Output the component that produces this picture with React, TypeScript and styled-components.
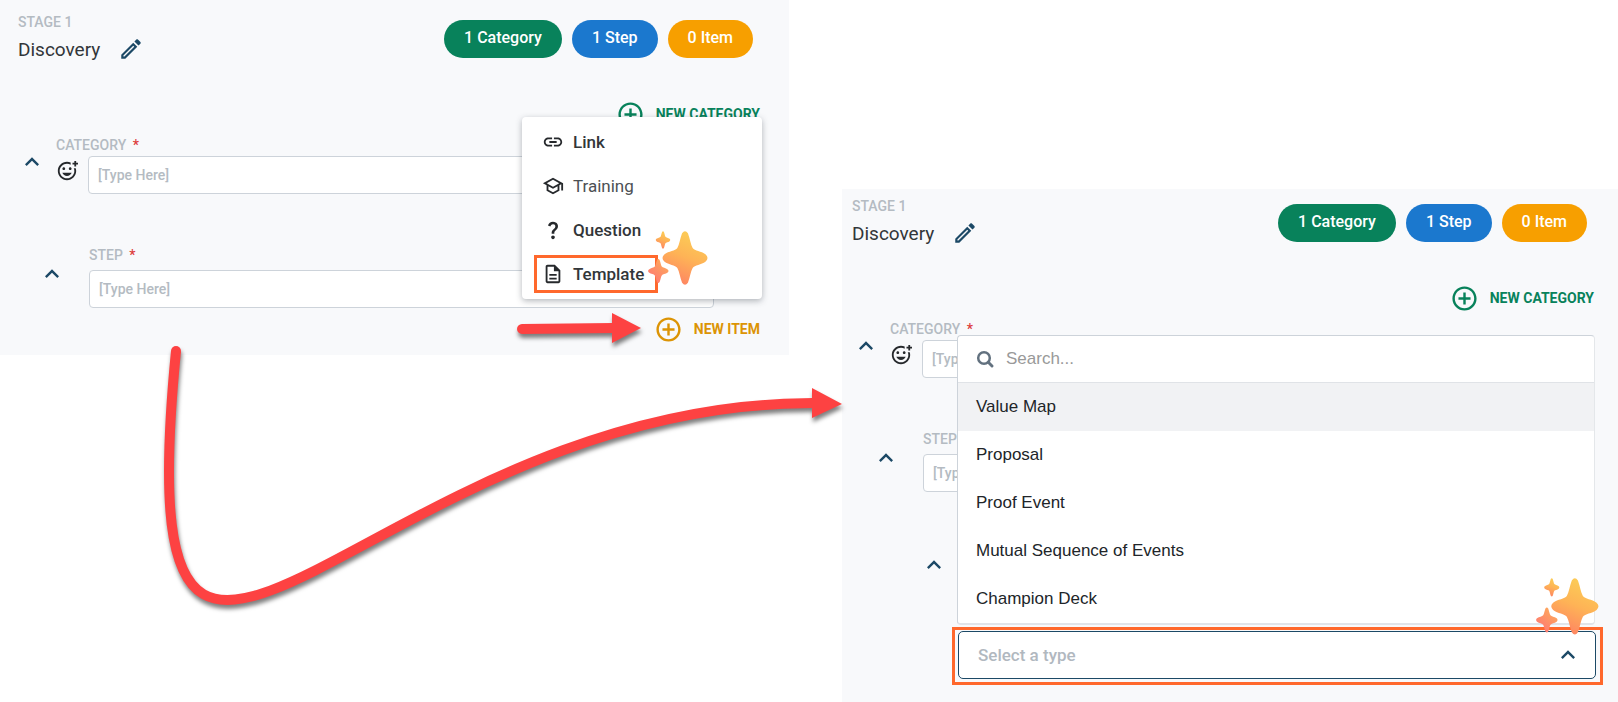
import React from "react";
import styled, { createGlobalStyle } from "styled-components";
import {
  MdAddCircleOutline,
  MdKeyboardArrowUp,
  MdLink,
  MdOutlineAddReaction,
  MdOutlineDescription,
  MdOutlineSchool,
  MdQuestionMark,
} from "react-icons/md";

const colors = {
  panel: "#f8f9fb",
  muted: "#b4bbc2",
  ink: "#323639",
  navy: "#1c4966",
  green: "#08825b",
  blue: "#1b78ce",
  amber: "#f79f00",
  amberText: "#dc9405",
  line: "#cdd3da",
  highlight: "#ff682c",
  arrow: "#fd4242",
};

const GlobalStyle = createGlobalStyle`
  * { box-sizing: border-box; }
  body { margin: 0; background: #fff; font-family: Roboto, "Liberation Sans", sans-serif; color: ${colors.ink}; }
  button, input, select { font-family: inherit; margin: 0; }
  svg { display: block; flex: none; }
`;

const Page = styled.main`
  position: relative;
  display: grid;
  grid-template-columns: 789fr 776fr;
  column-gap: 53px;
  align-items: start;
`;

const Panel = styled.section<{ $second?: boolean }>`
  background: ${colors.panel};
  margin-top: ${(p) => (p.$second ? 189 : 0)}px;
  padding: ${(p) => (p.$second ? "8px 24px 17px 10px" : "13px 29px 11px 18px")};
`;

const Header = styled.header`
  display: flex;
  justify-content: space-between;
  align-items: flex-start;
`;

const StageLabel = styled.div`
  font-size: 14px;
  line-height: 18px;
  font-weight: 500;
  color: ${colors.muted};
`;

const TitleRow = styled.div`
  display: flex;
  align-items: flex-start;
  gap: 18px;
  margin-top: 5px;
`;

const Title = styled.h2`
  margin: 0;
  font-size: 19px;
  line-height: 28px;
  font-weight: 400;
`;

const IconButton = styled.button`
  display: flex;
  padding: 0;
  border: 0;
  background: none;
  color: ${colors.navy};
`;

const Pills = styled.div`
  display: flex;
  gap: 10px;
  padding: 7px 7px 0 0;
`;

const Pill = styled.span<{ $color: string }>`
  padding: 0 20px 2px;
  border-radius: 19px;
  background: ${(p) => p.$color};
  color: #fff;
  font-size: 16px;
  line-height: 36px;
  font-weight: 500;
`;

const ActionRow = styled.div<{ $gap: number }>`
  position: relative;
  display: flex;
  justify-content: flex-end;
  align-items: center;
  gap: 13px;
  margin-top: ${(p) => p.$gap}px;
`;

const ActionButton = styled.button<{ $color: string }>`
  display: flex;
  align-items: center;
  gap: 11px;
  padding: 0;
  border: 0;
  background: none;
  color: ${(p) => p.$color};
  font-size: 14px;
  line-height: 29px;
  font-weight: 700;
`;

const Block = styled.div<{ $indent: number; $gap: number; $top: number }>`
  display: flex;
  align-items: flex-start;
  gap: ${(p) => p.$gap}px;
  margin-top: ${(p) => p.$top}px;
  padding-left: ${(p) => p.$indent}px;
`;

const Toggle = styled(IconButton)<{ $drop: number }>`
  margin-top: ${(p) => p.$drop}px;
`;

const Body = styled.div<{ $gap: number }>`
  flex: 1;
  min-width: 0;
  display: flex;
  flex-direction: column;
  gap: ${(p) => p.$gap}px;
  padding-right: 46px;
`;

const Label = styled.label`
  font-size: 14px;
  line-height: 18px;
  font-weight: 500;
  color: ${colors.muted};

  span { color: #dd3c3c; margin-left: 3px; }
`;

const InputRow = styled.div`
  display: flex;
  align-items: flex-start;
  gap: 10px;
`;

const Emoji = styled(IconButton)`
  margin-top: 4px;
  color: #26292c;
`;

const TextInput = styled.input`
  flex: 1;
  min-width: 0;
  width: 100%;
  height: 38px;
  padding: 0 9px;
  border: 1px solid ${colors.line};
  border-radius: 4px;
  background: #fff;
  font-size: 14px;
  font-weight: 500;

  &::placeholder { color: ${colors.muted}; opacity: 1; }
`;

const Menu = styled.div`
  position: absolute;
  right: -2px;
  bottom: calc(100% + 16px);
  z-index: 2;
  width: 240px;
  padding: 6px 12px;
  display: flex;
  flex-direction: column;
  gap: 6px;
  border-radius: 4px;
  background: #fff;
  box-shadow: 0 2px 6px rgba(40, 50, 60, 0.35);
`;

const MenuItem = styled.button<{ $marked?: boolean; $light?: boolean }>`
  align-self: flex-start;
  display: flex;
  align-items: center;
  gap: 9px;
  height: 38px;
  padding: 0 11px 0 5px;
  border: 3px solid ${(p) => (p.$marked ? colors.highlight : "transparent")};
  background: none;
  color: ${(p) => (p.$light ? "#4c5054" : colors.ink)};
  font-size: 17px;
  font-weight: ${(p) => (p.$light ? 400 : 500)};

  svg { color: #26292c; }
`;

const SparkleSvg = styled.svg<{ $right: number; $top: number }>`
  position: absolute;
  z-index: 4;
  right: ${(p) => p.$right}px;
  top: ${(p) => p.$top}px;
`;

const Marked = styled.div`
  position: relative;
  flex: 1;
  margin: 135px -9px 0 0;
  padding: 1px 4px 3px 3px;
  border: 3px solid ${colors.highlight};
`;

const SelectWrap = styled.div`
  position: relative;
  color: ${colors.navy};

  svg { position: absolute; right: 14px; top: 10px; pointer-events: none; }
`;

const Select = styled.select`
  display: block;
  appearance: none;
  width: 100%;
  height: 48px;
  padding: 0 48px 1px 19px;
  border: 1px solid ${colors.navy};
  border-radius: 5px;
  background: #fff;
  color: #b1b8bf;
  font-size: 17px;
  font-weight: 500;
`;

const Dropdown = styled.div`
  position: absolute;
  left: 2px;
  right: 5px;
  bottom: calc(100% + 5px);
  z-index: 3;
  border: 1px solid ${colors.line};
  border-width: 1px 1px 2px;
  border-color: ${colors.line} #e4e7ea #e1e4e9 ${colors.line};
  border-radius: 4px;
  background: #fff;
  font-family: "Liberation Sans", Arial, sans-serif;
`;

const SearchRow = styled.label`
  display: flex;
  align-items: center;
  gap: 12px;
  height: 47px;
  padding: 0 18px 1px;
  border-bottom: 1px solid #e0e3e7;
`;

const SearchInput = styled.input`
  flex: 1;
  border: 0;
  padding: 0;
  background: none;
  font-size: 17px;

  &::placeholder { color: #999; opacity: 1; }
`;

const Options = styled.ul`
  list-style: none;
  margin: 0;
  padding: 0;
`;

const Option = styled.li<{ $active?: boolean }>`
  padding: 0 18px;
  font-size: 17px;
  line-height: 48px;
  color: #212529;
  background: ${(p) => (p.$active ? "#f1f2f4" : "transparent")};
`;

const ShortArrow = styled.svg`
  overflow: visible;
  filter: drop-shadow(1px 4px 2px rgba(0, 0, 0, 0.5));
`;

const LongArrow = styled.svg`
  position: absolute;
  left: 160px;
  top: 340px;
  z-index: 5;
  overflow: visible;
  pointer-events: none;
  filter: drop-shadow(1px 4px 2px rgba(0, 0, 0, 0.5));
`;

function Pencil() {
  return (
    <svg width="26" height="26" viewBox="0 0 24 24" fill="currentColor">
      <path d="M14.06 9l.94.94L5.92 19H5v-.92L14.06 9m3.6-6c-.25 0-.51.1-.7.29l-1.83 1.83 3.75 3.75 1.83-1.83c.39-.39.39-1.04 0-1.41l-2.34-2.34c-.2-.2-.45-.29-.71-.29m-3.6 3.19L3 17.25V21h3.75L17.81 9.94l-3.75-3.75z" />
    </svg>
  );
}

function SearchIcon() {
  return (
    <svg width="18" height="18" viewBox="0 0 18 18" fill="none" stroke="#62717f" strokeWidth="2.5">
      <circle cx="8" cy="8" r="5.8" />
      <path d="M12.3 12.3l3.7 3.7" strokeWidth="2.9" strokeLinecap="round" />
    </svg>
  );
}

const STAR =
  "M-.13-.92Q0-1.08.13-.92C.22-.72.25-.5.34-.37C.43-.26.72-.26.92-.13Q1.08 0 .92.13C.72.26.43.26.34.37C.25.5.22.72.13.92Q0 1.08-.13.92C-.22.72-.25.5-.34.37C-.43.26-.72.26-.92.13Q-1.08 0-.92-.13C-.72-.26-.43-.26-.34-.37C-.25-.5-.22-.72-.13-.92Z";

function Sparkles({ id, width, right, top }: { id: string; width: number; right: number; top: number }) {
  return (
    <SparkleSvg $right={right} $top={top} width={width} viewBox="0 0 60 54" aria-hidden="true">
      <defs>
        <linearGradient id={id} x1="0.65" y1="0.1" x2="0.35" y2="0.95">
          <stop offset="0" stopColor="#fcc956" />
          <stop offset="0.45" stopColor="#feb356" />
          <stop offset="1" stopColor="#fe8762" />
        </linearGradient>
        <linearGradient id={`${id}-pink`} x1="0.8" y1="0.1" x2="0.3" y2="0.8">
          <stop offset="0" stopColor="#fda95b" />
          <stop offset="1" stopColor="#fe7f70" />
        </linearGradient>
      </defs>
      <path d={STAR} fill={`url(#${id})`} transform="translate(37 27) scale(22.5 26.8)" />
      <path d={STAR} fill={`url(#${id})`} transform="translate(15 9) scale(7.2 8.7)" />
      <path d={STAR} fill={`url(#${id}-pink)`} transform="translate(10.3 40) scale(10.2 12)" />
    </SparkleSvg>
  );
}

function StageTop() {
  return (
    <>
      <Header>
        <div>
          <StageLabel>STAGE 1</StageLabel>
          <TitleRow>
            <Title>Discovery</Title>
            <IconButton type="button" aria-label="Edit stage name">
              <Pencil />
            </IconButton>
          </TitleRow>
        </div>
        <Pills>
          <Pill $color={colors.green}>1 Category</Pill>
          <Pill $color={colors.blue}>1 Step</Pill>
          <Pill $color={colors.amber}>0 Item</Pill>
        </Pills>
      </Header>
      <ActionRow $gap={36}>
        <ActionButton type="button" $color={colors.green}>
          <MdAddCircleOutline size={29} />
          NEW CATEGORY
        </ActionButton>
      </ActionRow>
    </>
  );
}

function Fields({ prefix }: { prefix: string }) {
  return (
    <>
      <Block $indent={0} $gap={10} $top={7}>
        <Toggle type="button" $drop={12} aria-label="Collapse category">
          <MdKeyboardArrowUp size={28} />
        </Toggle>
        <Body $gap={2}>
          <Label htmlFor={`${prefix}-category`}>
            CATEGORY <span>*</span>
          </Label>
          <InputRow>
            <Emoji type="button" aria-label="Add emoji">
              <MdOutlineAddReaction size={22} />
            </Emoji>
            <TextInput id={`${prefix}-category`} placeholder="[Type Here]" />
          </InputRow>
        </Body>
      </Block>
      <Block $indent={20} $gap={23} $top={52}>
        <Toggle type="button" $drop={14} aria-label="Collapse step">
          <MdKeyboardArrowUp size={28} />
        </Toggle>
        <Body $gap={6}>
          <Label htmlFor={`${prefix}-step`}>
            STEP <span>*</span>
          </Label>
          <InputRow>
            <TextInput id={`${prefix}-step`} placeholder="[Type Here]" />
          </InputRow>
        </Body>
      </Block>
    </>
  );
}

const templateTypes = ["Value Map", "Proposal", "Proof Event", "Mutual Sequence of Events", "Champion Deck"];

export default function App() {
  return (
    <>
      <GlobalStyle />
      <Page>
        <Panel>
          <StageTop />
          <Fields prefix="first" />
          <ActionRow $gap={7}>
            <Menu>
              <MenuItem type="button">
                <MdLink size={22} />
                Link
              </MenuItem>
              <MenuItem type="button" $light>
                <MdOutlineSchool size={22} />
                Training
              </MenuItem>
              <MenuItem type="button">
                <MdQuestionMark size={22} />
                Question
              </MenuItem>
              <MenuItem type="button" $marked>
                <MdOutlineDescription size={22} />
                Template
              </MenuItem>
              <Sparkles id="spark-menu" width={60} right={54} top={114} />
            </Menu>
            <ShortArrow width="124" height="29" viewBox="0 0 124 29" aria-hidden="true">
              <path d="M5 14L96 13" stroke={colors.arrow} strokeWidth="10" strokeLinecap="round" />
              <path d="M95 -2L124 13L95 28Z" fill={colors.arrow} />
            </ShortArrow>
            <ActionButton type="button" $color={colors.amberText}>
              <MdAddCircleOutline size={29} />
              NEW ITEM
            </ActionButton>
          </ActionRow>
        </Panel>

        <Panel $second>
          <StageTop />
          <Fields prefix="second" />
          <Block $indent={68} $gap={4} $top={0}>
            <Toggle type="button" $drop={59} aria-label="Collapse item">
              <MdKeyboardArrowUp size={28} />
            </Toggle>
            <Marked>
              <SelectWrap>
                <Select aria-label="Template type" defaultValue="">
                  <option value="">Select a type</option>
                  {templateTypes.map((name) => (
                    <option key={name}>{name}</option>
                  ))}
                </Select>
                <MdKeyboardArrowUp size={28} />
              </SelectWrap>
              <Dropdown>
                <SearchRow>
                  <SearchIcon />
                  <SearchInput placeholder="Search..." aria-label="Search types" />
                </SearchRow>
                <Options role="listbox" aria-label="Template types">
                  {templateTypes.map((name, i) => (
                    <Option key={name} role="option" aria-selected={i === 0} $active={i === 0}>
                      {name}
                    </Option>
                  ))}
                </Options>
              </Dropdown>
              <Sparkles id="spark-select" width={63} right={1} top={-52} />
            </Marked>
          </Block>
        </Panel>

        <LongArrow width="690" height="280" viewBox="160 340 690 280" fill="none" aria-hidden="true">
          <path d="M176 351C124 880 362 402 814 403" stroke={colors.arrow} strokeWidth="10" />
          <circle cx="176" cy="351" r="5" fill={colors.arrow} />
          <path d="M812 388L842 404L812 418Z" fill={colors.arrow} />
        </LongArrow>
      </Page>
    </>
  );
}
